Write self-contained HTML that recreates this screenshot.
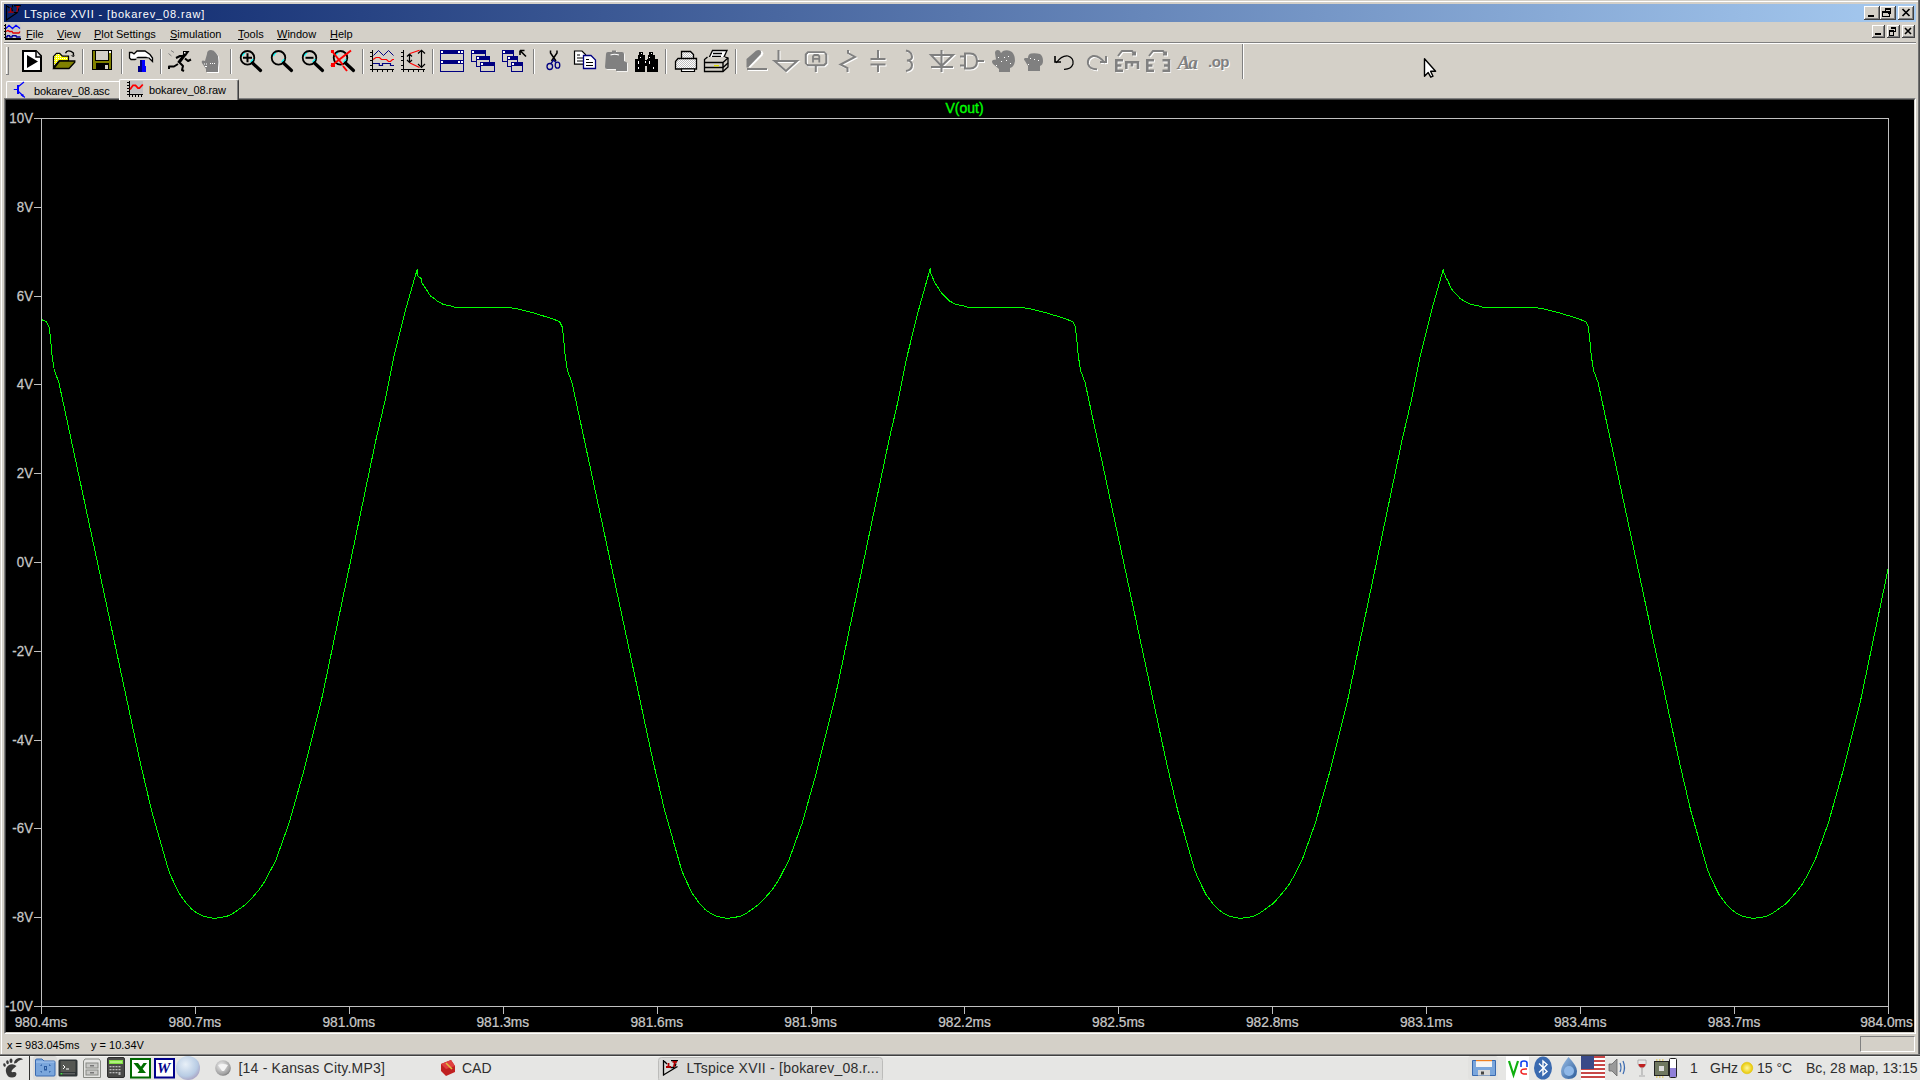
<!DOCTYPE html>
<html><head><meta charset="utf-8">
<style>
*{margin:0;padding:0;box-sizing:border-box}
html,body{width:1920px;height:1080px;overflow:hidden;background:#D4D0C8;font-family:"Liberation Sans",sans-serif;}
.abs{position:absolute}
#title{left:4px;top:4px;width:1912px;height:18px;background:linear-gradient(to right,#0A246A,#A6CAF0);}
#title .t{position:absolute;left:20px;top:3px;color:#fff;font-size:11px;line-height:14px;letter-spacing:0.86px}
.btn{position:absolute;background:#D4D0C8;border-top:1px solid #fff;border-left:1px solid #fff;border-right:1px solid #404040;border-bottom:1px solid #404040;box-shadow:inset -1px -1px 0 #808080}
.menu{position:absolute;top:27px;font-size:11px;color:#000;line-height:14px}
.menu u{text-decoration:underline;text-decoration-thickness:1px;text-underline-offset:1px}
#plot{left:4px;top:98px;width:1912px;height:936px;}
#status{left:0;top:1034px;width:1920px;height:21px}
#taskbar{left:0;top:1055px;width:1920px;height:25px;background:#EDECEB;border-top:1px solid #3c3c3c}
.tab{position:absolute;font-size:11px;line-height:13px;color:#000}
.tb{position:absolute;font-size:14px;color:#2e2e2e;top:1061px;line-height:14px;white-space:pre}
</style></head><body>
<!-- window frame -->
<div class="abs" style="left:1px;top:1px;width:1917px;height:1053px;border-top:1px solid #fff;border-left:1px solid #fff;"></div>
<div class="abs" style="left:1918px;top:0;width:2px;height:1055px;background:linear-gradient(to right,#808080,#404040)"></div>
<!-- title bar -->
<div id="title" class="abs">

  <div class="t">LTspice XVII - [bokarev_08.raw]</div>

</div>
<svg class="abs" style="left:4px;top:4px" width="20" height="18" viewBox="4 4 20 18">
  <g fill="none" stroke="#000" stroke-width="1.1">
    <path d="M6.5,5 V20.8 M6.8,19.8 L17.8,12.2 M6.5,5.5 L9.5,8 M12.5,5 V7.5 M14,5.6 H21 M18.6,8.5 L18,11.5 M13.5,12.5 H17.5 M11.5,8 L12.5,11.5"/>
  </g>
  <g fill="none" stroke="#b00000" stroke-width="1.3">
    <path d="M8.2,12.2 H13.8 M10.6,7.5 V12 M16.2,6.7 H19.6 M18,6.8 L16.8,12"/>
  </g>
</svg>
<!-- menu bar -->
<svg class="abs" style="left:4px;top:24px" width="17" height="16" viewBox="4 24 17 16">
  <rect x="5.5" y="24" width="15" height="12" fill="#c8c8c8"/>
  <g shape-rendering="crispEdges" fill="#000">
    <rect x="4.5" y="24" width="1.5" height="16"/><rect x="4.5" y="38" width="16" height="1.5"/>
    <rect x="4" y="25" width="1" height="1"/><rect x="4" y="28" width="1" height="1"/><rect x="4" y="31" width="1" height="1"/><rect x="4" y="34" width="1" height="1"/><rect x="4" y="37" width="1" height="1"/>
    <rect x="8" y="39" width="1" height="1"/><rect x="11" y="39" width="1" height="1"/><rect x="14" y="39" width="1" height="1"/><rect x="17" y="39" width="1" height="1"/>
  </g>
  <polyline points="6,28.5 9,25.3 12.5,28.5 16,25.3 20,28.5" stroke="#0000ff" fill="none" stroke-width="1.3"/>
  <polyline points="6,31.5 8,30.5 9.5,31.5 12,31.5 13,33 19,33 20,31.5" stroke="#e00000" fill="none" stroke-width="1.3"/>
  <polyline points="6,37 7,37 7.5,35.8 9.5,35.8 10,37 12,37 12.5,35.8 16,35.8 16.5,37 20.5,37" stroke="#0000a0" fill="none" stroke-width="1.4"/>
</svg>
<div class="menu" style="left:26px"><u>F</u>ile</div>
<div class="menu" style="left:57px"><u>V</u>iew</div>
<div class="menu" style="left:94px"><u>P</u>lot Settings</div>
<div class="menu" style="left:170px"><u>S</u>imulation</div>
<div class="menu" style="left:238px"><u>T</u>ools</div>
<div class="menu" style="left:277px"><u>W</u>indow</div>
<div class="menu" style="left:330px"><u>H</u>elp</div>
<svg class="abs" style="left:1860px;top:4px" width="60" height="36" viewBox="1860 4 60 36">
<g shape-rendering="crispEdges">
 <!-- title buttons -->
 <g id="tbtn">
  <rect x="1864" y="6" width="16" height="14" fill="#404040"/>
  <rect x="1864" y="6" width="15" height="13" fill="#fff"/>
  <rect x="1865" y="7" width="14" height="12" fill="#808080"/>
  <rect x="1865" y="7" width="13" height="11" fill="#D4D0C8"/>
 </g>
 <use href="#tbtn" x="16"/>
 <use href="#tbtn" x="34"/>
 <rect x="1868" y="15" width="6" height="2" fill="#000"/>
 <rect x="1885" y="8" width="6" height="1" fill="#000"/><rect x="1885" y="9" width="1" height="2" fill="#000"/><rect x="1885" y="8" width="1" height="1" fill="#000"/><rect x="1890" y="8" width="1" height="6" fill="#000"/><rect x="1888" y="13" width="3" height="1" fill="#000"/><rect x="1885" y="9" width="6" height="1" fill="#000"/>
 <rect x="1882" y="11" width="8" height="2" fill="#000"/><rect x="1882" y="13" width="1" height="4" fill="#000"/><rect x="1889" y="13" width="1" height="4" fill="#000"/><rect x="1882" y="16" width="8" height="1" fill="#000"/>
 <!-- mdi buttons -->
 <g id="mbtn">
  <rect x="1872" y="25" width="13" height="13" fill="#404040"/>
  <rect x="1872" y="25" width="12" height="12" fill="#fff"/>
  <rect x="1873" y="26" width="11" height="11" fill="#808080"/>
  <rect x="1873" y="26" width="10" height="10" fill="#D4D0C8"/>
 </g>
 <use href="#mbtn" x="15"/>
 <use href="#mbtn" x="30"/>
 <rect x="1875" y="33" width="6" height="2" fill="#000"/>
 <rect x="1891" y="27" width="5" height="2" fill="#000"/><rect x="1895" y="29" width="1" height="3" fill="#000"/><rect x="1893" y="31" width="3" height="1" fill="#000"/>
 <rect x="1889" y="30" width="5" height="2" fill="#000"/><rect x="1889" y="32" width="1" height="3" fill="#000"/><rect x="1893" y="32" width="1" height="3" fill="#000"/><rect x="1889" y="35" width="5" height="1" fill="#000"/>
</g>
<path d="M1902.5,9 L1909.5,16 M1909.5,9 L1902.5,16" stroke="#000" stroke-width="1.7"/>
<path d="M1905,28 L1911,34 M1911,28 L1905,34" stroke="#000" stroke-width="1.6"/>
</svg>
<div class="abs" style="left:4px;top:42px;width:1912px;height:1px;background:#808080"></div>
<div class="abs" style="left:4px;top:43px;width:1912px;height:1px;background:#fff"></div>
<!-- toolbar placeholder -->
<div id="toolbar"><svg class="abs" style="left:0;top:0" width="1260" height="80" viewBox="0 0 1260 80">
<defs>
  <pattern id="dith" width="2" height="2" patternUnits="userSpaceOnUse"><rect width="2" height="2" fill="#fff"/><rect width="1" height="1" fill="#c0c0c0"/><rect x="1" y="1" width="1" height="1" fill="#c0c0c0"/></pattern>
  <pattern id="ydith" width="2" height="2" patternUnits="userSpaceOnUse"><rect width="2" height="2" fill="#ffff00"/><rect width="1" height="1" fill="#fff"/></pattern>
</defs>
<g shape-rendering="crispEdges">
  <rect x="6" y="47" width="1" height="27" fill="#fff"/><rect x="8" y="47" width="1" height="28" fill="#808080"/><rect x="6" y="74" width="3" height="1" fill="#808080"/>
  <!-- separators -->
  <g fill="#808080">
    <rect x="82" y="49" width="1" height="25"/><rect x="121" y="49" width="1" height="25"/><rect x="160" y="49" width="1" height="25"/><rect x="230" y="49" width="1" height="25"/><rect x="362" y="49" width="1" height="25"/><rect x="432" y="49" width="1" height="25"/><rect x="533" y="49" width="1" height="25"/><rect x="665" y="49" width="1" height="25"/><rect x="735" y="49" width="1" height="25"/><rect x="1242" y="44" width="1" height="35"/>
  </g>
  <g fill="#fff">
    <rect x="83" y="49" width="1" height="25"/><rect x="122" y="49" width="1" height="25"/><rect x="161" y="49" width="1" height="25"/><rect x="231" y="49" width="1" height="25"/><rect x="363" y="49" width="1" height="25"/><rect x="433" y="49" width="1" height="25"/><rect x="534" y="49" width="1" height="25"/><rect x="666" y="49" width="1" height="25"/><rect x="736" y="49" width="1" height="25"/><rect x="1243" y="44" width="1" height="35"/>
  </g>
</g>
<!-- run -->
<path d="M23,51 H36 L41,56 V71 H23 Z" fill="#fff" stroke="#000" stroke-width="2" stroke-linejoin="miter"/>
<path d="M36,51 V57 H41" fill="#e8e8e8" stroke="#000" stroke-width="1.5"/>
<path d="M27,55 L38,61.5 L27,68 Z" fill="#000"/>
<!-- open -->
<path d="M53.5,60 V56.4 L56.5,53.3 H59.7 L62.3,56.2 H68.5 V61 H59 L53.5,67.5 Z" fill="url(#ydith)" stroke="#000" stroke-width="1.3"/>
<path d="M53.8,68.5 L59.5,61 H74.8 V62.3 L69,68.5 Z" fill="#808000" stroke="#000" stroke-width="1.3"/>
<path d="M65.5,53.2 C66.5,50.3 70,50 73.4,53 V55.5" fill="none" stroke="#000" stroke-width="1.4"/>
<path d="M70.5,55.6 H75 L73.3,57 Z" fill="#000"/>
<!-- save -->
<g shape-rendering="crispEdges">
<rect x="92" y="50" width="20" height="20" fill="#000"/>
<rect x="93" y="51" width="18" height="18" fill="#808000"/>
<rect x="95" y="50" width="14" height="11" fill="#000"/>
<rect x="96" y="51" width="12" height="9" fill="#d4d0c8"/>
<rect x="96" y="63" width="13" height="7" fill="#000"/>
<rect x="105" y="65" width="3" height="4" fill="#d4d0c8"/>
<rect x="109" y="51" width="2" height="2" fill="#fff"/>
</g>
<!-- hammer -->
<path d="M129.5,52.5 H132 L134,54 L137,51 H145 L150,54.5 L152.5,58 V61.5 L149,58 L146,57.5 H138 L135,59.5 H131 L129.5,58 Z" fill="#fff" stroke="#000" stroke-width="1.3"/>
<path d="M135,58.5 H146 L149,58" fill="none" stroke="#a0a0a0" stroke-width="1"/>
<g shape-rendering="crispEdges">
<rect x="140" y="60" width="2" height="6" fill="#000080"/><rect x="142" y="60" width="3" height="6" fill="#0000ff"/>
<rect x="138" y="66" width="4" height="6" fill="#000080"/><rect x="142" y="66" width="3.5" height="6" fill="#0000ff"/>
</g>
<!-- running man -->
<g fill="none" stroke="#000" stroke-width="2" stroke-linejoin="round">
<path d="M178,64 L174,66.5 H169 V69"/><path d="M184.5,55 L178.5,63" stroke-width="3.2"/>
<path d="M184,56 L180,56 L176,58"/>
<path d="M185,58.5 L188,61 L191,59.5"/>
<path d="M180,63 L183,66 L182,70 L184,71"/>
</g>
<path d="M183,51 H189.5 L186,56 H183 Z" fill="#000"/>
<rect x="184" y="52" width="1.5" height="1.5" fill="#fff"/>
<path d="M171,50.5 L174,52.5 M168.5,53.5 L171.5,56" stroke="#808080" stroke-width="1" fill="none"/>
<!-- hand gray -->
<path d="M207,54 Q207,50 211,50 Q214,50 216,53 L218,56 Q219,62 218,68 V72 H206 V69 L202,63 Q201,61 203,60.5 L205,61 Z" fill="#fff" transform="translate(1,1)"/>
<path d="M207,54 Q207,50 211,50 Q214,50 216,53 L218,56 Q219,62 218,68 V72 H206 V69 L202,63 Q201,61 203,60.5 L205,61 Z" fill="#808080"/>
<g fill="#fff"><rect x="204" y="63.5" width="1" height="1"/><rect x="206" y="63.5" width="1" height="1"/><rect x="210" y="63" width="1" height="1"/><rect x="212" y="63" width="1" height="1"/><rect x="214" y="63" width="1" height="1"/><rect x="205" y="66" width="2" height="1"/></g>
<!-- magnifiers -->
<g id="mag">
<circle cx="247.5" cy="57.8" r="6.8" fill="#d4d0c8" stroke="#000" stroke-width="1.8"/>
<path d="M242.5,56 Q243,54 245,53" stroke="#00ffff" stroke-width="1.3" fill="none"/>
<path d="M250.5,62 Q252,61 253,59" stroke="#00ffff" stroke-width="1.3" fill="none"/>
<path d="M252.5,63 L260.5,70.5" stroke="#000" stroke-width="3.2" stroke-linecap="round"/>
</g>
<path d="M243,57.8 H252 M247.5,53.3 V62.3" stroke="#000" stroke-width="2"/>
<use href="#mag" x="31"/>
<use href="#mag" x="62"/>
<path d="M305.5,57.8 H313.5" stroke="#000" stroke-width="2"/>
<use href="#mag" x="93"/>
<path d="M331.5,50.5 L343,65 M331,66 L351,50.5 M343,66 L347,71" stroke="#ff0000" stroke-width="2" fill="none"/>
<rect x="331" y="50" width="3" height="3" fill="#ff0000"/><rect x="331" y="63" width="4" height="4" fill="#ff0000"/>
<!-- plot icon -->
<g shape-rendering="crispEdges" fill="#000">
<rect x="372" y="50" width="1.3" height="22"/><rect x="370" y="69" width="24" height="1.3"/>
<rect x="370" y="52" width="2" height="1"/><rect x="370" y="56" width="2" height="1"/><rect x="370" y="60" width="2" height="1"/><rect x="370" y="65" width="2" height="1"/>
<rect x="377" y="70" width="1" height="2"/><rect x="382" y="70" width="1" height="2"/><rect x="387" y="70" width="1" height="2"/><rect x="392" y="70" width="1" height="2"/>
</g>
<polyline points="373.5,55.5 378.5,50.5 383.5,55.5 388.5,50.5 393.5,55.5" fill="none" stroke="#000080" stroke-width="1"/>
<polyline points="373,59.5 376,57.5 379.5,57.5 381.5,59.5 386.5,59.5 388.5,61.5 390.5,61.5 392.5,59.5 394,59.5" fill="none" stroke="#ff0000" stroke-width="1.2"/>
<polyline points="373,63.5 379.3,63.5 379.3,65.5 382.5,65.5 382.5,63.5 390.5,63.5 390.5,65.5 394,65.5" fill="none" stroke="#000080" stroke-width="1.2"/>
<!-- plot arrows icon -->
<g shape-rendering="crispEdges" fill="#000">
<rect x="403" y="50" width="1.3" height="22"/><rect x="401" y="69" width="24" height="1.3"/>
<rect x="401" y="52" width="2" height="1"/><rect x="401" y="56" width="2" height="1"/><rect x="401" y="60" width="2" height="1"/><rect x="401" y="65" width="2" height="1"/>
<rect x="408" y="70" width="1" height="2"/><rect x="413" y="70" width="1" height="2"/><rect x="418" y="70" width="1" height="2"/><rect x="423" y="70" width="1" height="2"/>
</g>
<path d="M410,53.5 L419.5,50.3 M410,63 L419.5,67.5" stroke="#ff0000" stroke-width="1.2" fill="none"/>
<path d="M409.5,54 V62.5 M407,56.5 L409.5,54 L412,56.5 M407,60 L409.5,62.5 L412,60 M421.5,50.3 V67.5 M418,53.5 L421.5,50.3 L425,53.5 M418,64 L421.5,67.5 L425,64" stroke="#000" stroke-width="1.2" fill="none"/>
<!-- tile -->
<g shape-rendering="crispEdges">
<rect x="440" y="50" width="24" height="22" fill="#000080"/>
<rect x="441" y="54" width="22" height="6" fill="#d4d0c8"/>
<rect x="441" y="64" width="22" height="7" fill="#d4d0c8"/>
<g fill="#fff"><rect x="441" y="51" width="2" height="2"/><rect x="458" y="51" width="2" height="2"/><rect x="461" y="51" width="2" height="2"/><rect x="441" y="61" width="2" height="2"/><rect x="458" y="61" width="2" height="2"/><rect x="461" y="61" width="2" height="2"/></g>
</g>
<!-- cascade -->
<g shape-rendering="crispEdges">
<rect x="471" y="50" width="15" height="12" fill="#000080"/><rect x="472" y="54" width="13" height="7" fill="#d4d0c8"/><rect x="472" y="51" width="2" height="2" fill="#fff"/>
<rect x="476" y="56" width="14" height="11" fill="#000080"/><rect x="477" y="60" width="12" height="6" fill="#d4d0c8"/><rect x="477" y="57" width="2" height="2" fill="#fff"/>
<rect x="480" y="62" width="15" height="10" fill="#000080"/><rect x="481" y="66" width="13" height="5" fill="#d4d0c8"/><rect x="481" y="63" width="2" height="2" fill="#fff"/>
</g>
<!-- arrange -->
<g shape-rendering="crispEdges">
<rect x="502" y="50" width="12" height="12" fill="#000080"/><rect x="503" y="54" width="10" height="7" fill="#d4d0c8"/><rect x="503" y="51" width="2" height="2" fill="#fff"/>
<rect x="507" y="56" width="11" height="11" fill="#000080"/><rect x="508" y="60" width="9" height="6" fill="#d4d0c8"/><rect x="508" y="57" width="2" height="2" fill="#fff"/>
<rect x="511" y="62" width="12" height="10" fill="#000080"/><rect x="512" y="66" width="10" height="5" fill="#d4d0c8"/><rect x="512" y="63" width="2" height="2" fill="#fff"/>
</g>
<path d="M520.5,51 L526,56.5 M520,50.5 V55 M520,50.5 H524.5" stroke="#000" stroke-width="1.6" fill="none"/>
<!-- scissors -->
<path d="M550.5,50.5 V53 L556,61 M557,50.5 V53 L551.5,61" stroke="#000" stroke-width="1.5" fill="none"/>
<ellipse cx="549.8" cy="66.5" rx="2.8" ry="3" fill="none" stroke="#000080" stroke-width="1.3"/>
<ellipse cx="557.5" cy="65.2" rx="2.3" ry="3" fill="none" stroke="#000080" stroke-width="1.3"/>
<path d="M551,63.5 L553.5,60 L556,62.5" stroke="#000080" stroke-width="1.3" fill="none"/>
<!-- copy -->
<path d="M574.5,51 H582 L585.5,54.5 V64.2 H574.5 Z" fill="#fff" stroke="#000" stroke-width="1.2"/>
<path d="M577,55 H580 M577,58 H583 M577,61 H583" stroke="#000" stroke-width="1"/>
<path d="M583.5,55.5 H591 L595.5,60 V68.5 H583.5 Z" fill="#fff" stroke="#000080" stroke-width="1.3"/>
<path d="M586,59.5 H589 M586,62.5 H593 M586,65.5 H593" stroke="#000" stroke-width="1"/>
<!-- paste gray -->
<path d="M606,54 Q606,52 608,52 H612 V50.5 H616 V52 H622 Q624,52 624,54 V61 L627,62.5 V71 H616 V69 H607 Q605,69 605,67 Z" fill="#fff" transform="translate(0.8,0.8)"/>
<path d="M606,54 Q606,52 608,52 H612 V50.5 H616 V52 H622 Q624,52 624,54 V61 L627,62.5 V71 H616 V69 H607 Q605,69 605,67 Z" fill="#808080"/>
<path d="M610.5,55 Q614.5,53.5 619,55" stroke="#fff" stroke-width="1.2" fill="none"/>
<!-- binoculars -->
<g shape-rendering="crispEdges" fill="#000">
<rect x="639" y="51.5" width="4" height="5"/><rect x="649" y="51.5" width="4" height="5"/>
<rect x="637.5" y="55" width="7" height="5"/><rect x="647.5" y="55" width="7" height="5"/>
<rect x="635" y="59" width="10" height="12.5"/><rect x="647" y="59" width="11" height="12.5"/>
<rect x="644" y="60" width="4" height="6"/>
</g>
<g fill="#fff" shape-rendering="crispEdges"><rect x="641" y="53" width="1" height="1"/><rect x="650.5" y="53" width="1" height="1"/><rect x="639.5" y="57" width="1" height="1"/><rect x="649" y="57" width="1" height="1"/><rect x="638" y="61" width="1" height="2.5"/><rect x="644.5" y="61" width="1" height="1.5"/><rect x="648.5" y="61" width="1" height="2.5"/><rect x="637.5" y="67" width="1" height="2"/><rect x="652.5" y="67" width="1" height="2"/></g>
<!-- print -->
<path d="M681.5,51.5 H690.5 L693.5,54.5 V59 H681.5 Z" fill="url(#dith)" stroke="#000" stroke-width="1.3"/>
<path d="M678,58.5 H696.5 V69 H675.5 V61.5 Z" fill="url(#dith)" stroke="#000" stroke-width="1.3"/>
<path d="M681.5,69 H694.5 V71.5 H681.5 Z" fill="#fff" stroke="#000" stroke-width="1.2"/>
<!-- print setup -->
<path d="M712.5,50.5 H727 L723,59 H708.5 Z" fill="#fff" stroke="#000" stroke-width="1.3"/>
<path d="M713,53.5 H722 M712,56.5 H721" stroke="#000" stroke-width="1.5"/>
<path d="M707.5,57 L704.5,59.5 V71.5 H723 L728,67 V58 L725,57" fill="#d4d0c8" stroke="#000" stroke-width="1.3"/>
<path d="M704.5,62.5 H723 V71.5 M723,62.5 L728,58 M704.5,67.5 H723 L728,63" fill="none" stroke="#000" stroke-width="1.4"/>
<rect x="714" y="65" width="5" height="1.3" fill="#e0e000"/>
<!-- disabled schematic icons: white shadow then gray -->
<g id="schem" fill="none" stroke-width="2">
<g stroke="#fff" transform="translate(1,1)">
  <path d="M747,69 H767"/><path d="M778.5,50 V61 M774.5,61 H797 L786,71 Z"/>
  <path d="M808,52.2 H824 L826.3,54.5 V63 L824,65.3 H808 L805.8,63 V54.5 Z M815.8,65.5 V72"/><path d="M848,50 V53 L855,57 L840.5,64.5 L847.5,68 V72"/>
  <path d="M878,50 V59 M870.5,59 H885.5 M870.5,64.5 H885.5 M878,64.5 V72"/><path d="M906,50.5 Q912,52 912,57 Q912,60 907,60.5 Q912,61 912,65 Q912,70 906,71"/>
  <path d="M941.5,50 V72 M931,55 H953 L941.5,66 Z M931,67 H953"/>
  <path d="M960,56.5 H965 M960,65.5 H965 M965,53.5 H970 Q977,53.5 977,61 Q977,68.5 970,68.5 H965 Z M977,61 H984"/>
  <path d="M1105,63 Q1099,55 1093,56 Q1087,58 1088,64 Q1090,69.5 1097,69.3 M1106,56 V62 H1100"/>
  <path d="M1118,56 L1122,51 H1132 L1135,54.5 M1132,54.5 H1135 V51.5"/><path d="M1149,56 L1153,51 H1163 L1166,54.5 M1163,54.5 H1166 V51.5"/>
</g>
<g stroke="#808080">
  <path d="M747,69 H767"/><path d="M778.5,50 V61 M774.5,61 H797 L786,71 Z"/>
  <path d="M808,52.2 H824 L826.3,54.5 V63 L824,65.3 H808 L805.8,63 V54.5 Z M815.8,65.5 V72"/><path d="M848,50 V53 L855,57 L840.5,64.5 L847.5,68 V72"/>
  <path d="M878,50 V59 M870.5,59 H885.5 M870.5,64.5 H885.5 M878,64.5 V72"/><path d="M906,50.5 Q912,52 912,57 Q912,60 907,60.5 Q912,61 912,65 Q912,70 906,71"/>
  <path d="M941.5,50 V72 M931,55 H953 L941.5,66 Z M931,67 H953"/>
  <path d="M960,56.5 H965 M960,65.5 H965 M965,53.5 H970 Q977,53.5 977,61 Q977,68.5 970,68.5 H965 Z M977,61 H984"/>
  <path d="M1105,63 Q1099,55 1093,56 Q1087,58 1088,64 Q1090,69.5 1097,69.3 M1106,56 V62 H1100"/>
  <path d="M1118,56 L1122,51 H1132 L1135,54.5 M1132,54.5 H1135 V51.5"/><path d="M1149,56 L1153,51 H1163 L1166,54.5 M1163,54.5 H1166 V51.5"/>
</g>
</g>
<!-- pencil fill -->
<path d="M747.5,66 L757.5,51.5 Q759.5,49.5 761.5,51 Q763,52.5 761.5,55 L749,67.5 Z" fill="#fff" transform="translate(1,0.5)"/>
<path d="M746.5,67.5 V59 L756,50.8 Q758.5,49.3 760.5,50.5 Q762,52 760.5,54.5 L748,67.5 Z" fill="#808080"/>
<!-- label A -->
<path d="M808,53.5 H824.5 M807.5,54 V64" stroke="#fff" stroke-width="1" fill="none"/>
<path d="M813,62.5 V56.3 L814.3,55 H818 L819.3,56.3 V62.5 M813,58.8 H819.3" stroke="#808080" stroke-width="1.8" fill="none"/>
<!-- undo black -->
<path d="M1056,63 Q1062,55 1068,56 Q1074,58 1073,64 Q1071,69.5 1064,69.3" fill="none" stroke="#000" stroke-width="1.2"/>
<path d="M1055,56 V62 H1061" fill="none" stroke="#000" stroke-width="1.6"/>
<!-- hands gray -->
<path d="M993,64 Q991,61 993,60 L996,59.5 L995,53 Q995,50 998,50 Q1000,50 1001,53 L1003,51 Q1008,49 1012,52 Q1015,55 1015,61 Q1014,67 1010,68 V72 H999 V69 Z" fill="#808080"/>
<path d="M1025,61 Q1023,59 1025,58 L1028,58 Q1028,54 1031,53.5 Q1036,53 1040,54 Q1043,56 1043,61 Q1043,65 1040,66 V71 H1028 V66 Z" fill="#808080"/>
<g fill="#fff" shape-rendering="crispEdges"><rect x="998" y="57" width="1" height="1"/><rect x="1004" y="57" width="1" height="1"/><rect x="1008" y="56" width="1" height="1"/><rect x="996" y="65" width="1" height="1"/><rect x="1001" y="61" width="1" height="1"/><rect x="1006" y="60" width="1" height="1"/><rect x="1010" y="63" width="1" height="1"/><rect x="1030" y="58" width="1" height="1"/><rect x="1034" y="59" width="1" height="1"/><rect x="1038" y="60" width="1" height="1"/><rect x="1028" y="64" width="1" height="1"/></g>
<!-- E icons -->
<g fill="none" stroke="#fff" stroke-width="2.6" transform="translate(0.8,0.8)">
<path d="M1123,60.3 H1116.3 V70.7 H1123 M1116.3,65.5 H1121.5"/>
<path d="M1126.3,69 V62.3 H1138 V69 M1132,62.3 V66.5"/>
<path d="M1154,60.3 H1147.3 V70.7 H1154 M1147.3,65.5 H1152.5"/>
<path d="M1162.5,60.3 H1169 V70.7 H1162.5 M1169,65.5 H1164"/>
</g>
<g fill="none" stroke="#808080" stroke-width="2.6">
<path d="M1123,60.3 H1116.3 V70.7 H1123 M1116.3,65.5 H1121.5"/>
<path d="M1126.3,69 V62.3 H1138 V69 M1132,62.3 V66.5"/>
<path d="M1154,60.3 H1147.3 V70.7 H1154 M1147.3,65.5 H1152.5"/>
<path d="M1162.5,60.3 H1169 V70.7 H1162.5 M1169,65.5 H1164"/>
</g>
<!-- Aa .op -->
<text x="1178.5" y="70" font-family="Liberation Serif" font-style="italic" font-weight="bold" font-size="19px" fill="#fff" letter-spacing="-2">Aa</text>
<text x="1177.5" y="69" font-family="Liberation Serif" font-style="italic" font-weight="bold" font-size="19px" fill="#808080" letter-spacing="-2">Aa</text>
<text x="1209" y="68" font-family="Liberation Sans" font-weight="bold" font-size="15px" fill="#fff" letter-spacing="-0.5">.op</text>
<text x="1208" y="67" font-family="Liberation Sans" font-weight="bold" font-size="15px" fill="#808080" letter-spacing="-0.5">.op</text>
</svg></div>
<!-- tabs -->
<div class="abs" style="left:6px;top:81px;width:113px;height:17px;border-top:1px solid #fff;border-left:1px solid #fff;border-top-left-radius:2px"></div>
<svg class="abs" style="left:12px;top:80px" width="16" height="19" viewBox="12 80 16 19">
  <rect x="17" y="85.2" width="2" height="8.5" fill="#0000ff" shape-rendering="crispEdges"/>
  <path d="M13.8,89.5 H17 M18.5,86.5 L24,82 M18.5,91.5 L24.8,97.5" stroke="#0000ff" stroke-width="1.2" fill="none"/>
  <path d="M20.5,95 L23.5,94 L23,97 Z" fill="#0000ff"/>
</svg>
<div class="tab" style="left:34px;top:85px;letter-spacing:-0.15px">bokarev_08.asc</div>
<div class="abs" style="z-index:2;left:119px;top:79px;width:120px;height:21px;background:#D4D0C8;border-top:1px solid #fff;border-left:1px solid #fff;border-right:1px solid #404040;box-shadow:inset -1px 0 0 #808080;border-top-left-radius:2px;border-top-right-radius:2px"></div>
<svg class="abs" style="z-index:3;left:126px;top:80px" width="18" height="18" viewBox="126 80 18 18">
  <rect x="130" y="81" width="13" height="12.5" fill="#c0c0c0"/>
  <g shape-rendering="crispEdges" fill="#000"><rect x="129" y="81" width="1.2" height="16"/><rect x="127" y="94" width="16" height="1.2"/>
  <rect x="127" y="82" width="2" height="1"/><rect x="127" y="85" width="2" height="1"/><rect x="127" y="88" width="2" height="1"/><rect x="127" y="91" width="2" height="1"/>
  <rect x="132" y="95" width="1" height="2"/><rect x="135" y="95" width="1" height="2"/><rect x="138" y="95" width="1" height="2"/><rect x="141" y="95" width="1" height="2"/></g>
  <polyline points="130,89.5 133,85.3 135.5,85.3 138,88.2 139.5,88.2 142.8,84.5" fill="none" stroke="#ff0000" stroke-width="1.8"/>
</svg>
<div class="tab" style="z-index:3;left:149px;top:84px;letter-spacing:-0.1px">bokarev_08.raw</div>
<!-- plot -->
<div class="abs" style="left:4px;top:98px;width:1912px;height:936px;border-top:1px solid #808080;border-left:1px solid #808080;border-right:1px solid #fff;border-bottom:1px solid #fff"></div>
<div class="abs" style="left:5px;top:99px;width:1910px;height:934px;background:#000;border-top:1px solid #404040;border-left:1px solid #404040;border-right:1px solid #D4D0C8;border-bottom:1px solid #D4D0C8"></div>
<svg class="abs" style="left:0;top:0" width="1920" height="1080">
  <g stroke="#c0c0c0" stroke-width="1" shape-rendering="crispEdges" fill="none">
    <rect x="41.5" y="118.5" width="1847" height="888"/>
    <line x1="34" y1="118.5" x2="41" y2="118.5"/><line x1="34" y1="207.5" x2="41" y2="207.5"/><line x1="34" y1="296.5" x2="41" y2="296.5"/><line x1="34" y1="384.5" x2="41" y2="384.5"/><line x1="34" y1="473.5" x2="41" y2="473.5"/><line x1="34" y1="562.5" x2="41" y2="562.5"/><line x1="34" y1="651.5" x2="41" y2="651.5"/><line x1="34" y1="740.5" x2="41" y2="740.5"/><line x1="34" y1="828.5" x2="41" y2="828.5"/><line x1="34" y1="917.5" x2="41" y2="917.5"/><line x1="34" y1="1006.5" x2="41" y2="1006.5"/>
    <line x1="41.5" y1="1006" x2="41.5" y2="1014"/><line x1="195.5" y1="1006" x2="195.5" y2="1014"/><line x1="349.5" y1="1006" x2="349.5" y2="1014"/><line x1="503.5" y1="1006" x2="503.5" y2="1014"/><line x1="657.5" y1="1006" x2="657.5" y2="1014"/><line x1="811.5" y1="1006" x2="811.5" y2="1014"/><line x1="964.5" y1="1006" x2="964.5" y2="1014"/><line x1="1118.5" y1="1006" x2="1118.5" y2="1014"/><line x1="1272.5" y1="1006" x2="1272.5" y2="1014"/><line x1="1426.5" y1="1006" x2="1426.5" y2="1014"/><line x1="1580.5" y1="1006" x2="1580.5" y2="1014"/><line x1="1734.5" y1="1006" x2="1734.5" y2="1014"/><line x1="1888.5" y1="1006" x2="1888.5" y2="1014"/>
  </g>
  <g fill="#c8c8c8" stroke="#c8c8c8" stroke-width="0.25" font-family="Liberation Sans" font-size="14px">
    <text transform="translate(33,123) scale(0.95,1)" text-anchor="end">10V</text><text transform="translate(33,212) scale(0.95,1)" text-anchor="end">8V</text><text transform="translate(33,301) scale(0.95,1)" text-anchor="end">6V</text><text transform="translate(33,389) scale(0.95,1)" text-anchor="end">4V</text><text transform="translate(33,478) scale(0.95,1)" text-anchor="end">2V</text><text transform="translate(33,567) scale(0.95,1)" text-anchor="end">0V</text><text transform="translate(33,656) scale(0.95,1)" text-anchor="end">-2V</text><text transform="translate(33,745) scale(0.95,1)" text-anchor="end">-4V</text><text transform="translate(33,833) scale(0.95,1)" text-anchor="end">-6V</text><text transform="translate(33,922) scale(0.95,1)" text-anchor="end">-8V</text><text transform="translate(33,1011) scale(0.95,1)" text-anchor="end">-10V</text>
    <text transform="translate(41.0,1027) scale(0.98,1)" text-anchor="middle">980.4ms</text><text transform="translate(194.9,1027) scale(0.98,1)" text-anchor="middle">980.7ms</text><text transform="translate(348.8,1027) scale(0.98,1)" text-anchor="middle">981.0ms</text><text transform="translate(502.8,1027) scale(0.98,1)" text-anchor="middle">981.3ms</text><text transform="translate(656.7,1027) scale(0.98,1)" text-anchor="middle">981.6ms</text><text transform="translate(810.6,1027) scale(0.98,1)" text-anchor="middle">981.9ms</text><text transform="translate(964.5,1027) scale(0.98,1)" text-anchor="middle">982.2ms</text><text transform="translate(1118.4,1027) scale(0.98,1)" text-anchor="middle">982.5ms</text><text transform="translate(1272.3,1027) scale(0.98,1)" text-anchor="middle">982.8ms</text><text transform="translate(1426.2,1027) scale(0.98,1)" text-anchor="middle">983.1ms</text><text transform="translate(1580.2,1027) scale(0.98,1)" text-anchor="middle">983.4ms</text><text transform="translate(1734.1,1027) scale(0.98,1)" text-anchor="middle">983.7ms</text><text transform="translate(1886.5,1027) scale(0.98,1)" text-anchor="middle">984.0ms</text>
  </g>
  <text x="964.5" y="113" fill="#00ff00" stroke="#00ff00" stroke-width="0.35" font-family="Liberation Sans" font-size="14px" text-anchor="middle">V(out)</text>
  <polyline points="41.5,319.6 46.5,321.7 49.1,326.9 50.2,335.7 51.3,346.9 52.1,355.7 53.2,363.1 54.3,370.4 58.8,382.2 70.6,437.0 88.4,520.0 139.7,760.0 151.4,810.0 166.9,864.5 168.5,870.0 171.3,876.9 176.3,887.5 179.4,893.8 185.7,902.5 191.9,909.4 198.2,913.8 204.4,916.6 214.4,918.4 220.0,917.5 226.3,916.6 232.5,913.8 238.8,909.4 245.7,904.4 250.7,899.4 258.8,890.0 263.2,883.8 266.9,877.5 270.7,870.0 275.7,860.6 289.2,822.8 303.4,772.4 321.5,700.0 375.9,440.0 384.9,401.3 394.0,356.1 405.7,309.2 417.3,269.0 418.0,276.0 421.5,279.0 422.0,283.0 426.0,289.0 430.5,296.0 433.5,298.0 437.7,301.3 443.0,304.3 451.0,306.1 455.0,307.4 505.0,307.4 515.6,308.3 524.4,310.6 534.0,313.1 545.2,316.5 554.0,319.4 559.6,321.7 562.2,326.9 563.3,335.7 564.4,346.9 565.2,355.7 566.3,363.1 567.4,370.4 571.9,382.2 583.7,437.0 601.5,520.0 652.8,760.0 664.5,810.0 680.0,864.5 681.6,870.0 684.4,876.9 689.4,887.5 692.5,893.8 698.8,902.5 705.0,909.4 711.3,913.8 717.5,916.6 727.5,918.4 733.1,917.5 739.4,916.6 745.6,913.8 751.9,909.4 758.8,904.4 763.8,899.4 771.9,890.0 776.3,883.8 780.0,877.5 783.8,870.0 788.8,860.6 802.3,822.8 816.5,772.4 834.6,700.0 889.0,440.0 898.0,401.3 907.1,356.1 918.8,309.2 930.3,268.3 931.1,274.3 935.1,283.1 941.4,292.8 950.0,301.3 955.9,304.3 964.8,306.1 968.5,307.4 1018.1,307.4 1028.7,308.3 1037.5,310.6 1047.1,313.1 1058.3,316.5 1067.1,319.4 1072.7,321.7 1075.3,326.9 1076.4,335.7 1077.5,346.9 1078.3,355.7 1079.4,363.1 1080.5,370.4 1085.0,382.2 1096.8,437.0 1114.6,520.0 1165.9,760.0 1177.6,810.0 1193.1,864.5 1194.7,870.0 1197.5,876.9 1202.5,887.5 1205.6,893.8 1211.9,902.5 1218.1,909.4 1224.4,913.8 1230.6,916.6 1240.6,918.4 1246.2,917.5 1252.5,916.6 1258.7,913.8 1265.0,909.4 1271.9,904.4 1276.9,899.4 1285.0,890.0 1289.4,883.8 1293.1,877.5 1296.9,870.0 1301.9,860.6 1315.4,822.8 1329.6,772.4 1347.7,700.0 1402.1,440.0 1411.1,401.3 1420.2,356.1 1431.9,309.2 1443.3,269.4 1444.0,272.8 1446.3,278.7 1447.8,280.6 1450.4,286.9 1452.6,290.6 1460.0,298.3 1464.4,301.3 1470.4,304.3 1477.8,305.7 1482.2,307.2 1531.1,307.4 1541.7,308.3 1550.5,310.6 1560.1,313.1 1571.3,316.5 1580.1,319.4 1585.7,321.7 1588.3,326.9 1589.4,335.7 1590.5,346.9 1591.3,355.7 1592.4,363.1 1593.5,370.4 1598.0,382.2 1609.8,437.0 1627.6,520.0 1678.9,760.0 1690.6,810.0 1706.1,864.5 1707.7,870.0 1710.5,876.9 1715.5,887.5 1718.6,893.8 1724.9,902.5 1731.1,909.4 1737.4,913.8 1743.6,916.6 1753.6,918.4 1759.2,917.5 1765.5,916.6 1771.7,913.8 1778.0,909.4 1784.9,904.4 1789.9,899.4 1798.0,890.0 1802.4,883.8 1806.1,877.5 1809.9,870.0 1814.9,860.6 1828.4,822.8 1842.6,772.4 1860.7,700.0 1888.0,569.6" stroke="#00ff00" stroke-width="1" fill="none" shape-rendering="crispEdges"/>
</svg>
<!-- status -->
<div class="abs" style="left:7px;top:1038px;font-size:11px;color:#000;line-height:14px;white-space:pre">x = 983.045ms</div><div class="abs" style="left:91px;top:1038px;font-size:11px;color:#000;line-height:14px;white-space:pre">y = 10.34V</div>
<div class="abs" style="left:1860px;top:1036px;width:55px;height:16px;border-top:1px solid #808080;border-left:1px solid #808080;border-bottom:1px solid #fff;border-right:1px solid #fff"></div>
<!-- taskbar -->
<svg class="abs" style="left:0;top:1054px" width="1920" height="26" viewBox="0 1054 1920 26">
<defs>
  <radialGradient id="globe" cx="0.4" cy="0.35" r="0.7"><stop offset="0" stop-color="#e8f0f8"/><stop offset="0.7" stop-color="#b8cce4"/><stop offset="1" stop-color="#a8a0c0"/></radialGradient>
  <radialGradient id="metal" cx="0.4" cy="0.35" r="0.7"><stop offset="0" stop-color="#f0f0f0"/><stop offset="0.8" stop-color="#a0a0a0"/><stop offset="1" stop-color="#707070"/></radialGradient>
  <radialGradient id="sun" cx="0.5" cy="0.5" r="0.5"><stop offset="0" stop-color="#fff8a0"/><stop offset="1" stop-color="#e8c800"/></radialGradient>
  <linearGradient id="drop" x1="0" y1="0" x2="1" y2="1"><stop offset="0" stop-color="#9cc0e8"/><stop offset="1" stop-color="#2a5a98"/></linearGradient>
</defs>
<rect x="0" y="1054" width="1920" height="1" fill="#808080"/><rect x="0" y="1055" width="1920" height="1" fill="#404040"/>
<rect x="0" y="1056" width="1920" height="24" fill="#E6E6E4"/><rect x="0" y="1056" width="1920" height="1" fill="#F4F4F2"/>
<rect x="29" y="1056" width="1" height="24" fill="#303030"/>
<!-- gnome foot -->
<path d="M16.5,1066 Q13,1063 9,1065 Q5,1067.5 6,1072 Q7,1077.5 12,1077.5 Q16,1077.5 16.5,1074 Q16.5,1071.5 13.5,1072 Q11,1072.5 11.5,1071 Q12.5,1069 16.5,1066 Z" fill="#3a3a3a"/>
<ellipse cx="4.5" cy="1065" rx="1.2" ry="1.8" fill="#3a3a3a" transform="rotate(-20 4.5 1065)"/>
<ellipse cx="7.5" cy="1062.3" rx="1.3" ry="2" fill="#3a3a3a" transform="rotate(-10 7.5 1062.3)"/>
<ellipse cx="11" cy="1060.8" rx="1.5" ry="2.2" fill="#3a3a3a"/>
<path d="M14,1063.5 Q14,1059 19,1058 Q22,1057.5 23,1059.5 Q20,1059.5 18.5,1061 Q16.5,1063.5 14,1063.5 Z" fill="#3a3a3a"/>
<!-- folder highlight -->
<rect x="33" y="1056" width="24" height="24" rx="3" fill="#DCDCDA"/>
<path d="M35.5,1060 Q35.5,1059 37,1059 H42 L44,1061 H54 Q55,1061 55,1062 V1075 Q55,1076 54,1076 H36.5 Q35.5,1076 35.5,1075 Z" fill="#7aa6dc" stroke="#3a6ab0" stroke-width="1"/>
<path d="M36,1062 H54.5" stroke="#a8c8f0" stroke-width="1"/>
<path d="M41,1066 V1065 H42 M49,1065 H50 V1066 M41,1071 V1072 H42 M49,1072 H50 V1071" stroke="#2a5aa0" stroke-width="1" fill="none"/>
<rect x="44.5" y="1066.5" width="2" height="3.5" fill="none" stroke="#2a5aa0" stroke-width="1"/>
<!-- terminal -->
<rect x="58.5" y="1059.5" width="19" height="17" rx="1.5" fill="#2e3436"/>
<rect x="60.5" y="1061" width="15" height="11" fill="#555753"/>
<path d="M63,1065 L65,1067 L63,1069 M66,1069 H69" stroke="#fff" stroke-width="1" fill="none"/>
<rect x="60.5" y="1073" width="2" height="1.5" fill="#4ae04a"/><rect x="63" y="1073.3" width="12" height="1" fill="#777"/>
<!-- cabinet -->
<path d="M83.5,1061 L85,1059 H99 L100.5,1061 V1077.5 H83.5 Z" fill="#e4e4e2" stroke="#888a85" stroke-width="1"/>
<rect x="86" y="1063" width="12" height="5" fill="#c8c8c6" stroke="#888a85" stroke-width="1"/>
<rect x="86" y="1070" width="12" height="5" fill="#c8c8c6" stroke="#888a85" stroke-width="1"/>
<rect x="90" y="1065" width="4" height="1.5" fill="#777"/><rect x="90" y="1072" width="4" height="1.5" fill="#777"/>
<!-- calculator -->
<rect x="107.5" y="1057.5" width="17" height="20" rx="1.5" fill="#4a4a48" stroke="#2e2e2e" stroke-width="1"/>
<rect x="109" y="1060" width="14" height="4" fill="#80e040"/><rect x="110" y="1061" width="12" height="2" fill="#b0f080"/>
<g fill="#bcbcbc"><rect x="109.5" y="1066" width="2" height="1.3"/><rect x="112.5" y="1066" width="2" height="1.3"/><rect x="115.5" y="1066" width="2" height="1.3"/><rect x="118.5" y="1066" width="2" height="1.3"/><rect x="109.5" y="1069" width="2" height="1.3"/><rect x="112.5" y="1069" width="2" height="1.3"/><rect x="115.5" y="1069" width="2" height="1.3"/><rect x="118.5" y="1069" width="2" height="1.3"/><rect x="109.5" y="1072" width="2" height="1.3"/><rect x="112.5" y="1072" width="2" height="1.3"/><rect x="115.5" y="1072" width="2" height="1.3"/><rect x="118.5" y="1072" width="2" height="3"/></g>
<!-- excel -->
<rect x="131" y="1059" width="19" height="18.5" fill="#fff" stroke="#006a00" stroke-width="2"/>
<path d="M133.5,1063 H138 L146,1073 H141.5 Z M140,1068 L143.5,1063 H147 L142.5,1069 Z M137.5,1073 L141,1068.5 L143,1071 L141.5,1073 Z" fill="#007000"/>
<!-- word -->
<rect x="155" y="1059" width="19" height="18.5" fill="#fff" stroke="#00008a" stroke-width="2"/>
<text x="157" y="1073" font-family="Liberation Serif" font-weight="bold" font-style="italic" font-size="15px" fill="#00008a">W</text>
<!-- globe -->
<circle cx="188" cy="1068" r="12" fill="url(#globe)"/>
<!-- music -->
<circle cx="223" cy="1068" r="7.8" fill="url(#metal)"/>
<path d="M218,1065 Q223,1063 228,1065 L224,1071 H222 Z" fill="#f4f4f4"/>
<!-- CAD toolbox -->
<path d="M441,1064 L451,1060 L455,1066 L455,1072 L446,1076 L441,1071 Z" fill="#c02020"/>
<path d="M441,1064 L451,1060 L455,1066 L446,1069 Z" fill="#e04040"/>
<path d="M446,1063 L452,1069" stroke="#e0c040" stroke-width="1.5"/>
<!-- active task -->
<rect x="658.5" y="1057.5" width="224" height="24" rx="3" fill="#DADAD8" stroke="#bcbcba" stroke-width="1"/>
<g transform="translate(657,1055)">
  <path d="M6.5,5 V20.8 M6.8,19.8 L20.5,11.5 M6.5,5.5 L10,9 M14,5.6 H21 M19,8.5 L18,11.5 M13.5,12.5 H17.5" fill="none" stroke="#000" stroke-width="1.3"/>
  <path d="M9,12 H14 M11.5,8 V12 M15.5,6.8 H20 M18,6.8 L16.8,12" fill="none" stroke="#b00000" stroke-width="1.8"/>
</g>
<!-- tray -->
<rect x="1468" y="1056" width="30" height="24" rx="3" fill="#E2E2E0"/>
<path d="M1472.5,1060.5 H1495.5 V1075.5 H1472.5 Z" fill="#7aa6dc" stroke="#3a6ab0" stroke-width="1"/>
<rect x="1476" y="1060" width="16" height="7" fill="#f4f4f4"/><rect x="1476" y="1060" width="16" height="1.2" fill="#f08020"/>
<rect x="1478" y="1070" width="12" height="5.5" fill="#d8d8d8"/><rect x="1481" y="1071.5" width="3" height="3" fill="#444"/>
<rect x="1506" y="1056" width="23" height="24" fill="#fff"/>
<path d="M1509,1061 L1513.5,1075 L1518,1061" stroke="#10b010" stroke-width="2.2" fill="none"/>
<path d="M1521,1067 V1063 Q1521,1061 1524,1061 Q1527,1061 1527,1063 V1067" stroke="#1040f0" stroke-width="1.6" fill="none"/>
<path d="M1527,1069 Q1521,1068.5 1521,1071.5 Q1521,1074.5 1527,1074" stroke="#f02020" stroke-width="1.6" fill="none"/>
<ellipse cx="1543" cy="1068" rx="9" ry="11.5" fill="#3a6ab0"/>
<path d="M1539,1063.5 L1547,1071.5 L1543,1075 V1061 L1547,1064.5 L1539,1072.5" stroke="#fff" stroke-width="1.4" fill="none"/>
<path d="M1568.5,1057 Q1561,1066 1561,1071 Q1561,1079 1568.5,1079 Q1577,1079 1577,1071 Q1577,1066 1568.5,1057 Z" fill="url(#drop)"/>
<ellipse cx="1569" cy="1071" rx="5" ry="5" fill="#8fb8e8"/>
<rect x="1581" y="1056" width="24" height="24" fill="#fff"/>
<g fill="#c84848"><rect x="1581" y="1056" width="24" height="2"/><rect x="1581" y="1060" width="24" height="2"/><rect x="1581" y="1064" width="24" height="2"/><rect x="1581" y="1068" width="24" height="2"/><rect x="1581" y="1072" width="24" height="2"/><rect x="1581" y="1076" width="24" height="2"/></g>
<rect x="1581" y="1056" width="13" height="13" fill="#3a4a88"/>
<path d="M1609,1064 H1612 L1617,1059 V1076 L1612,1071 H1609 Z" fill="#9a9a9a" stroke="#666" stroke-width="0.8"/>
<path d="M1620,1063 Q1622,1067.5 1620,1072 M1623,1061 Q1626,1067.5 1623,1074" stroke="#3a6ab0" stroke-width="1.2" fill="none"/>
<path d="M1638,1060 H1646 Q1647,1067 1642,1068 Q1637,1067 1638,1060 Z" fill="#e8e8e8" stroke="#999" stroke-width="0.7"/>
<path d="M1638.5,1064 H1645.5 Q1645,1067.5 1642,1067.5 Q1639,1067.5 1638.5,1064 Z" fill="#c02020"/>
<path d="M1642,1068 V1075 M1639,1076 H1645" stroke="#aaa" stroke-width="1.2"/>
<rect x="1654.5" y="1061.5" width="14" height="14" fill="#707860" stroke="#222" stroke-width="1"/>
<rect x="1659" y="1066" width="5" height="5" fill="#ddd"/>
<g fill="#e0d080"><rect x="1656" y="1059" width="1.5" height="2"/><rect x="1659" y="1059" width="1.5" height="2"/><rect x="1662" y="1059" width="1.5" height="2"/><rect x="1656" y="1076" width="1.5" height="2"/><rect x="1659" y="1076" width="1.5" height="2"/><rect x="1662" y="1076" width="1.5" height="2"/></g>
<rect x="1669.5" y="1058.5" width="7" height="19" rx="1" fill="#fff" stroke="#222" stroke-width="1"/>
<rect x="1670" y="1068" width="6" height="9" fill="#9080d8"/>
<circle cx="1747" cy="1068" r="5.8" fill="url(#sun)" stroke="#e0c000" stroke-width="0.5"/>
</svg>

<div class="tb" style="left:238.5px;letter-spacing:0.2px">[14 - Kansas City.MP3]</div>
<div class="tb" style="left:462px">CAD</div>
<div class="tb" style="left:686.5px;letter-spacing:0.22px">LTspice XVII - [bokarev_08.r...</div>
<div class="tb" style="left:1690px">1</div>
<div class="tb" style="left:1710px">GHz</div>
<div class="tb" style="left:1757px">15 °C</div>
<div class="tb" style="left:1806px">Вс, 28 мар, 13:15</div>
<svg class="abs" style="left:1420px;top:55px" width="20" height="26" viewBox="1420 55 20 26">
<path d="M1424.5,58.8 V76.3 L1428.2,72.6 L1430.8,77.2 L1433,76.2 L1430.6,71.3 H1435.6 Z" fill="#fff" stroke="#000" stroke-width="1.4" stroke-linejoin="round"/>
</svg>
</body></html>
